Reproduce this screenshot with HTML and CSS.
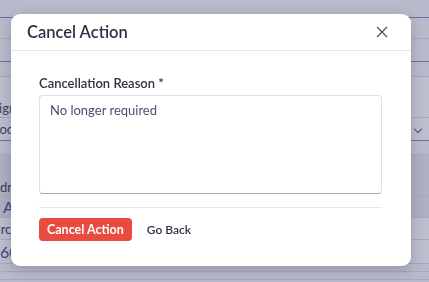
FILE: index.html
```html
<!DOCTYPE html>
<html>

<head>
    <title>Cancel action</title>
    <link rel="stylesheet" href="styles.css">
</head>

<body>
    <div class="page">
        <div class="row blue h18"></div>
        <div class="row h21"></div>
        <div class="row blue h23"></div>
        <div class="row h7"></div>
        <div class="row h41 field"><span class="cut assigned">Assigned</span></div>
        <div class="row h23 field blue"><span class="cut good">Good</span><span class="chev"></span></div>
        <div class="row h14"></div>
        <div class="row h42 dark"><span class="cut address">Address</span></div>
        <div class="row h21 dark"><span class="cut big active">Active</span></div>
        <div class="row h22 field"><span class="cut source">Source</span></div>
        <div class="row h24 field"><span class="cut big amount">600</span></div>
        <div class="row h8"></div>
        <div class="row h8"></div>
    </div>

    <div class="backdrop">
        <div class="modal">
            <div class="modal-header">
                <h2>Cancel Action</h2>
                <button class="close" aria-label="Close">
                    <svg width="12" height="12" viewBox="0 0 12 12">
                        <path d="M1 1 L11 11 M11 1 L1 11" stroke="#4b4f5c" stroke-width="1.2" fill="none" />
                    </svg>
                </button>
            </div>
            <div class="modal-body">
                <label for="reason">Cancellation Reason *</label>
                <textarea id="reason">No longer required</textarea>
                <div class="modal-footer">
                    <button class="btn btn-danger">Cancel Action</button>
                    <button class="btn btn-link">Go Back</button>
                </div>
            </div>
        </div>
    </div>
</body>

</html>
```

FILE: styles.css
```css
body {
    margin: 0;
    font-family: Lato, "Open Sans", sans-serif;
    background: #ffffff;
    overflow: hidden;
}

.page {
    width: 429px;
    height: 282px;
    background: #f4f5f8;
}

.row {
    border-bottom: 1px solid #d9dbe3;
    box-sizing: border-box;
    display: flex;
    align-items: center;
    justify-content: space-between;
    font-size: 13px;
    color: #3a3f55;
}

.h7 { height: 15px; }
.h8 { height: 8px; }
.h14 { height: 14px; }
.h18 { height: 18px; }
.h21 { height: 21px; }
.h22 { height: 22px; }
.h23 { height: 23px; }
.h24 { height: 24px; }
.h41 { height: 41px; align-items: flex-end; }
.h42 { height: 42px; align-items: flex-end; }

.row.blue {
    border-bottom-color: #7d86b8;
}

.row.field {
    background: #fbfbfd;
}

.row.dark {
    background: #e4e6ec;
}

.cut {
    line-height: 16px;
}

.cut.big {
    font-size: 16px;
    color: #3a4b8c;
}

.assigned { margin-left: -21px; padding-bottom: 1px; }
.good { margin-left: -10px; }
.address { margin-left: -16px; padding-bottom: 1px; }
.active { margin-left: 3px; }
.source { margin-left: -21px; }
.amount { margin-left: 0; }

.chev {
    width: 5px;
    height: 5px;
    margin-right: 8px;
    border-right: 1px solid #5a6078;
    border-bottom: 1px solid #5a6078;
    transform: rotate(45deg);
}

.backdrop {
    position: fixed;
    inset: 0;
    background: rgba(58, 65, 108, 0.32);
    padding: 14px 0 0 11px;
}

.modal {
    width: 400px;
    height: 252px;
    box-sizing: border-box;
    background: #ffffff;
    border-radius: 9px;
    box-shadow: 0 4px 14px rgba(30, 35, 60, 0.25);
    display: flex;
    flex-direction: column;
}

.modal-header {
    height: 37px;
    box-sizing: border-box;
    border-bottom: 1px solid #e4e5ee;
    display: flex;
    align-items: center;
    justify-content: space-between;
    padding: 0 23px 0 16px;
}

.modal-header h2 {
    margin: 0;
    font-size: 16.5px;
    font-weight: 600;
    color: #2b3242;
}

.close {
    border: 0;
    background: none;
    padding: 0;
    display: flex;
}

.modal-body {
    padding: 24px 29px 0 28px;
    display: flex;
    flex-direction: column;
}

.modal-body label {
    font-size: 13px;
    font-weight: 600;
    line-height: 16px;
    color: #2b3242;
    margin-bottom: 4px;
}

textarea {
    height: 99px;
    box-sizing: border-box;
    border: 1px solid #dedfea;
    border-bottom-color: #9fa6c2;
    border-radius: 4px;
    padding: 6px 10px;
    font-family: Lato, "Open Sans", sans-serif;
    font-size: 13px;
    color: #49516f;
    resize: none;
}

.modal-footer {
    margin-top: 13px;
    border-top: 1px solid #e6e7ec;
    padding-top: 10px;
    display: flex;
    align-items: center;
    gap: 7px;
}

.btn {
    font-family: Lato, "Open Sans", sans-serif;
    font-size: 12.5px;
    height: 23px;
    border: 0;
    border-radius: 4px;
    padding: 0 8px;
}

.btn-danger {
    background: #e74c3f;
    color: #ffffff;
    font-weight: 700;
}

.btn-link {
    background: none;
    color: #2b3242;
    font-weight: 600;
    font-size: 12px;
}
```
